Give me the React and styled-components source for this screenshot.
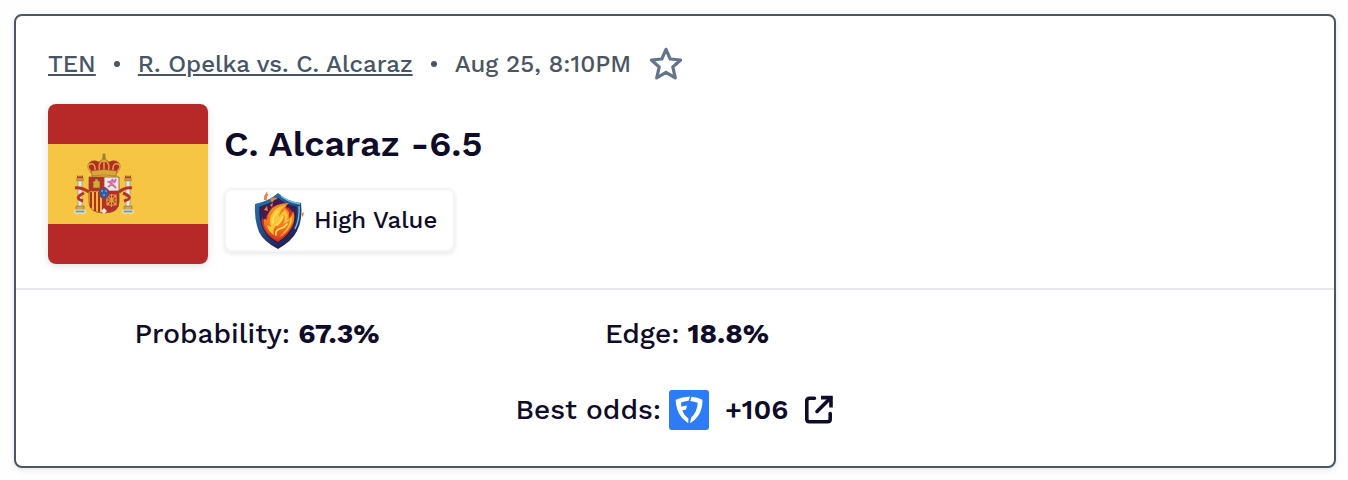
import React from "react";
import styled, { createGlobalStyle } from "styled-components";

const Global = createGlobalStyle`
  *, *::before, *::after { box-sizing: border-box; }
  body {
    margin: 0;
    background: #fefefe;
    color: #0f0c29;
    font-family: "Work Sans", Inter, "Liberation Sans", sans-serif;
    font-weight: 500;
  }
`;

const Page = styled.main`
  padding: 14px 12px 12px 14px;
`;

const Card = styled.article`
  border: 2px solid #4b5563;
  border-radius: 8px;
  background: #fff;
  box-shadow: 0 2px 6px rgba(0, 0, 0, 0.1);
`;

const Header = styled.header`
  display: flex;
  flex-direction: column;
  gap: 24px;
  padding: 32px 32px 24px;
  border-bottom: 2px solid #e5e7eb;
`;

const Meta = styled.div`
  display: flex;
  align-items: center;
  height: 32px;
  font-size: 24px;
  line-height: 32px;
  color: #4b5563;
`;

const MetaLink = styled.a`
  color: #475569;
  text-decoration: underline;
  text-decoration-thickness: 2px;
  text-underline-offset: 2px;
`;

const Dot = styled.span`
  width: 6px;
  height: 6px;
  margin: 0 18px;
  border-radius: 50%;
  background: #4b5563;
`;

const IconButton = styled.button`
  display: flex;
  margin: 0 0 0 18px;
  padding: 0;
  border: 0;
  background: none;
  color: #64748b;
  cursor: pointer;
`;

const Pick = styled.div`
  display: flex;
  gap: 16px;
`;

const FlagBox = styled.div`
  flex: none;
  width: 160px;
  height: 160px;
  overflow: hidden;
  border-radius: 8px;
  box-shadow: 0 2px 8px rgba(0, 0, 0, 0.12);
`;

const PickBody = styled.div`
  display: flex;
  flex-direction: column;
  align-items: flex-start;
  gap: 24px;
  padding-top: 20px;
`;

const Title = styled.h2`
  margin: 0;
  font-size: 36px;
  line-height: 40px;
  font-weight: 600;
`;

const Badge = styled.div`
  display: flex;
  align-items: center;
  gap: 10px;
  height: 64px;
  padding: 0 16px 0 26px;
  border: 2px solid #f3f4f6;
  border-radius: 8px;
  background: #fff;
  box-shadow: 0 2px 5px rgba(0, 0, 0, 0.09);
  font-size: 24px;
  line-height: 32px;
`;

const Stats = styled.dl`
  display: grid;
  grid-template-columns: repeat(3, 1fr);
  margin: 0;
  padding: 24px 2px 0 26px;
`;

const Stat = styled.div`
  display: flex;
  justify-content: center;
  gap: 8px;
  font-size: 28px;
  line-height: 40px;

  dt, dd { margin: 0; }
  dd { font-weight: 700; }
`;

const Odds = styled.div`
  display: flex;
  align-items: center;
  justify-content: center;
  padding: 36px 0;
  font-size: 28px;
  line-height: 40px;
`;

const OddsLink = styled.a`
  display: flex;
  align-items: center;
  gap: 16px;
  margin-left: 8px;
  color: inherit;
  font-weight: 600;
  text-decoration: none;
`;

const StarIcon = () => (
  <svg width="34" height="34" viewBox="0 0 34 34" fill="none" stroke="currentColor" strokeWidth="3.2" strokeLinejoin="round" aria-hidden="true">
    <path d="M17 2.3 21.2 12 31.6 13 23.8 20 26.3 30.9 17 25.3 7.7 30.9 10.2 20 2.4 13 12.8 12Z" />
  </svg>
);

const ExternalIcon = () => (
  <svg width="30" height="30" viewBox="0 0 30 30" fill="none" stroke="currentColor" strokeWidth="3.6" strokeLinecap="round" strokeLinejoin="round" aria-hidden="true">
    <path d="M10.5 3.3H5.5Q2.8 3.3 2.8 6V24Q2.8 26.7 5.5 26.7H23.5Q26.2 26.7 26.2 24V18.5" />
    <path strokeLinecap="butt" strokeLinejoin="miter" d="M17 2.6H27V12.6" />
    <path d="M26.5 3.1 13 16.6" />
  </svg>
);

const SportsbookLogo = () => (
  <svg width="40" height="40" viewBox="0 0 40 40" role="img" aria-label="FanDuel">
    <rect width="40" height="40" rx="3" fill="#2b7cf6" />
    <path fill="#fff" d="M6.7 9.7Q13 6.8 21 6.6L19.6 10.8Q15 11.2 12 12.5L12.4 16.8Q15.2 15.7 18.1 15.5L17 19.4Q15 19.7 13.2 20.6Q14.8 25 19.3 28.5V33.2Q10.5 27.4 8 18.5Q6.7 13.8 6.7 9.7Z" />
    <path fill="#fff" d="M22.6 6.7Q28.6 7 33.5 9.7Q33.7 25.6 21 33.2L22.2 27.4Q28.2 22.1 28.7 12.7Q25.4 11.3 21.2 10.9Z" />
  </svg>
);

const ShieldIcon = () => (
  <svg width="52" height="60" viewBox="0 0 52 60" aria-hidden="true">
    <defs>
      <linearGradient id="rim" x1="0" y1="0" x2="0.6" y2="1">
        <stop offset="0" stopColor="#2c78b0" />
        <stop offset="0.5" stopColor="#27508e" />
        <stop offset="1" stopColor="#231c50" />
      </linearGradient>
      <linearGradient id="blaze" x1="0.6" y1="0" x2="0.4" y2="1">
        <stop offset="0" stopColor="#f58a24" />
        <stop offset="0.6" stopColor="#f47a20" />
        <stop offset="1" stopColor="#d93a1c" />
      </linearGradient>
    </defs>
    <path fill="url(#rim)" d="M26 3Q34 11 49 13Q51 29 45 41Q40 51 26 59Q12 52 7 42Q2 29 3 14Q17 11 26 3Z" />
    <path fill="none" stroke="#69c3e2" strokeWidth="1.4" d="M29 6Q36 12 48 14M47 16Q48 29 43 39" />
    <path fill="#431d4c" stroke="#172554" strokeWidth="1" d="M26 8Q33 15 44 17Q45 30 40 39Q35 48 26 53Q16 48 12 40Q7 30 8 17Q18 15 26 8Z" />
    <path fill="#c93420" d="M10 28Q13 32 15 25L20 17 25 15 37 18 42 24Q43 34 39 39Q34 47 26 52Q16 47 12 39Q9 33 10 28Z" />
    <path fill="url(#blaze)" d="M37 13Q24 13 18 21Q15 25 15 30L12 29Q11 38 17 44Q21 48 26 50Q36 44 40 35Q44 28 41 21Q40 26 37 28Q38 20 33 18Q34 15 37 13Z" />
    <path fill="#ffc53a" d="M34 15Q22 17 19 26Q17 31 19 37L15 35Q16 41 22 45Q20 38 26 34Q31 30 32 24Q34 29 31 34Q35 33 38 29Q38 38 27 47Q35 43 39 34Q41 29 40 26Q38 29 35 30Q37 24 33 20Q30 22 27 27Q27 20 34 15Z" />
    <path fill="none" stroke="#ffe45c" strokeWidth="1.6" strokeLinecap="round" d="M26 21Q20 26 21 33M31 27Q29 32 25 35M35 34Q32 38 27 39Q23 41 24 45" />
    <path fill="#ed8045" d="M12 10Q11 5 16 1Q14 5 17 4Q14 7 15 10ZM18 9Q22 6 26 9Q22 9 20 13ZM49 24 52 22 51 27ZM12 20 15 16 16 21ZM18 15 21 13 20 17Z" />
  </svg>
);

const Pillar = ({ x }) => (
  <g transform={`translate(${x} 0)`}>
    <path fill="#b23b2c" d="M-2 74V71L0 73 1 71 2 73 4 71V74Z" />
    <path fill="#c69435" d="M-3 74H5V77H-3Z" />
    <path fill="#e6e7e2" stroke="#8b8a83" strokeWidth=".6" d="M-1 77H3V103H-1Z" />
    <path fill="#d5a744" stroke="#765d35" strokeWidth=".5" d="M-3 102H5V106H-3Z" />
    <path fill="#6d9db6" stroke="#e7e9e3" strokeWidth="1" d="M-4 106H6V109H-4Z" />
  </g>
);

const SpainFlag = () => (
  <svg width="160" height="160" viewBox="0 0 160 160" role="img" aria-label="Spain">
    <path fill="#b72929" d="M0 0H160V160H0Z" />
    <path fill="#f6c544" d="M0 40H160V120H0Z" />
    <Pillar x={31} />
    <Pillar x={79} />
    <path fill="none" stroke="#b83324" strokeWidth="3" d="M27 84Q33 83 41 88M36 89Q25 94 35 97M84 84Q77 83 71 88M75 89Q87 94 76 97" />
    <path fill="#b92c2a" d="M41 73H56V87H41Z" />
    <path fill="#ece7e5" d="M56 73H71V87H56Z" />
    <path fill="#f0bc31" d="M41 87H56V109Q41 109 41 98Z" />
    <path fill="#b92c2a" d="M56 87H71V98Q71 109 56 109Z" />
    <path stroke="#b72b28" strokeWidth="2" d="M43 88V104M47 88V107M51 88V108M55 88V108" />
    <path fill="none" stroke="#8d5130" strokeWidth=".8" d="M41 73H71V98Q71 109 56 109Q41 109 41 98ZM56 73V109M41 87H71" />
    <path fill="#d4a936" stroke="#755b24" strokeWidth=".6" d="M45 84V77H47V75H50V77H52V84Z" />
    <path fill="none" stroke="#d76aa1" strokeWidth="2" d="M60 83 64 80 61 78 65 77 64 75M64 80 68 84M66 79 68 75" />
    <path fill="none" stroke="#dda23b" strokeWidth="1.2" d="M59 91H68V101H59ZM59 91 68 101M68 91 59 101M63.5 90V103M58 96H69" />
    <ellipse cx="56" cy="89" rx="5" ry="5.5" fill="#315daa" stroke="#ad302a" />
    <path stroke="#ddbb54" strokeWidth="1" d="M53 87H55M57 87H59M55 91H57" />
    <path fill="#b82927" stroke="#9b622a" strokeWidth=".7" d="M43 69Q38 63 41 59Q45 55 51 58Q56 53 61 58Q67 55 71 59Q74 63 69 69Z" />
    <path fill="none" stroke="#dfa53a" strokeWidth="1.5" d="M44 69Q37 62 42 60Q48 58 47 69M52 69Q49 58 56 56Q63 58 60 69M65 69Q64 58 70 60Q75 62 68 69M56 52V69" />
    <path fill="#d9a738" stroke="#8a5c27" strokeWidth=".6" d="M43 67Q56 64 69 67L68 72Q56 70 44 72Z" />
    <circle cx="56" cy="54" r="2" fill="#8c8645" />
    <path stroke="#a96f27" strokeWidth="1" d="M56 49V53M54 51H58" />
    <path fill="#e8e8df" d="M53 107 56 104 59 107 56 110Z" />
  </svg>
);

export default function App() {
  return (
    <>
      <Global />
      <Page>
        <Card>
          <Header>
            <Meta>
              <MetaLink href="#tennis">TEN</MetaLink>
              <Dot />
              <MetaLink href="#match">R. Opelka vs. C. Alcaraz</MetaLink>
              <Dot />
              <time>Aug 25, 8:10PM</time>
              <IconButton type="button" aria-label="Add to favorites"><StarIcon /></IconButton>
            </Meta>
            <Pick>
              <FlagBox><SpainFlag /></FlagBox>
              <PickBody>
                <Title>C. Alcaraz -6.5</Title>
                <Badge><ShieldIcon />High Value</Badge>
              </PickBody>
            </Pick>
          </Header>
          <Stats>
            <Stat><dt>Probability:</dt><dd>67.3%</dd></Stat>
            <Stat><dt>Edge:</dt><dd>18.8%</dd></Stat>
          </Stats>
          <Odds>
            <span>Best odds:</span>
            <OddsLink href="#odds" aria-label="+106 at FanDuel">
              <SportsbookLogo />
              <span>+106</span>
              <ExternalIcon />
            </OddsLink>
          </Odds>
        </Card>
      </Page>
    </>
  );
}
